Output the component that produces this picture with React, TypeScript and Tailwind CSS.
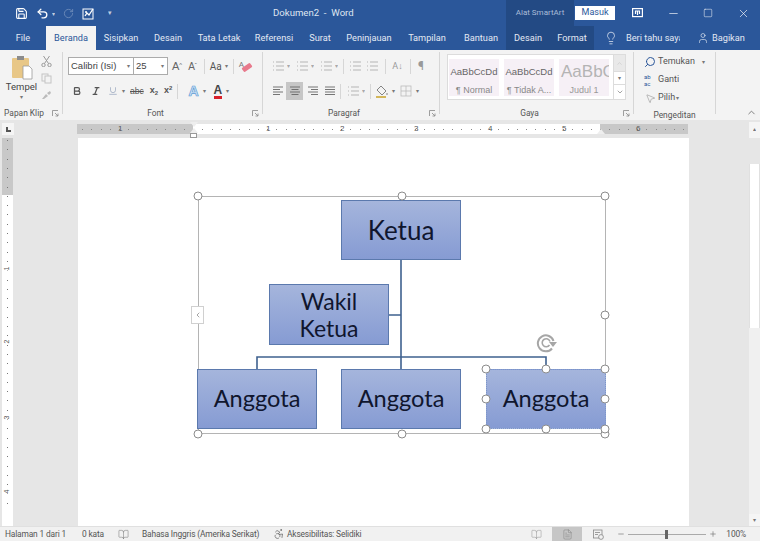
import { Search, Lightbulb, User, MousePointer2, Minus, Square, X, ChevronUp, ChevronDown, Save, Undo2, Bold, Italic, Underline, RotateCcw, ChevronLeft, Accessibility, BookOpen, FileText, Plus } from 'lucide-react';

const hRulerTicks = Array.from({ length: 66 }, (_, i) => i);

export default function App() {
  return (
    <div className="w-[760px] h-[541px] flex flex-col overflow-hidden bg-[#e6e6e6] text-[#444] font-['Roboto','Liberation_Sans',sans-serif]">
      <TitleBar />
      <Tabs />
      <Ribbon />
      <RulerRow />
      <Workspace />
      <StatusBar />
    </div>
  );
}

function TitleBar() {
  return (
    <div className="h-[26px] shrink-0 bg-[#2b579a] flex items-center text-white relative">
      <div className="w-[273px] flex items-center pl-[15px] shrink-0">
        <Save size={13} strokeWidth={2} />
        <Undo2 size={13} strokeWidth={2.4} className="ml-[8px]" />
        <span className="text-[6px] opacity-70 ml-[3px]">▾</span>
        <RotateCcw size={11} strokeWidth={2} className="opacity-30 -scale-x-100 ml-[8px]" />
        <svg className="ml-[8px]" width="13" height="13" viewBox="0 0 13 13" fill="none" stroke="white" strokeWidth="1">
          <rect x="1" y="2" width="10" height="10" />
          <path d="M3 9l2-3 2 2 4-6M3 5h2" strokeWidth="1.3" />
        </svg>
        <span className="text-[7px] opacity-70 ml-[13px]">▾</span>
      </div>
      <div className="text-[9.6px] text-[#dfe6f1] whitespace-pre">Dokumen2  -  Word</div>
      <div className="ml-auto flex items-center h-full">
        <div className="w-[68px] h-full bg-[#234a84] flex items-center justify-center text-[8px] text-[#a9bcd8]">Alat SmartArt</div>
        <div className="w-[40px] h-[14px] ml-[1px] bg-white text-[#2b579a] text-[9px] flex items-center justify-center">Masuk</div>
        <svg className="ml-[17px]" width="11" height="10" viewBox="0 0 11 10" fill="none" stroke="white" strokeWidth="1.2">
          <rect x="0.6" y="0.6" width="9.8" height="8" />
          <path d="M3.5 6V3h4v3M5.5 3v4" />
        </svg>
        <Minus size={13} className="ml-[24px]" strokeWidth={1.2} />
        <Square size={10} className="ml-[23px]" strokeWidth={1.2} />
        <X size={13} className="ml-[24px] mr-[10px]" strokeWidth={1.2} />
      </div>
    </div>
  );
}

function Tabs() {
  const left = [
    ['Sisipkan', 'w-[50px]'],
    ['Desain', 'w-[44px]'],
    ['Tata Letak', 'w-[58px]'],
    ['Referensi', 'w-[52px]'],
    ['Surat', 'w-[40px]'],
    ['Peninjauan', 'w-[58px]'],
    ['Tampilan', 'w-[58px]'],
    ['Bantuan', 'w-[50px]'],
  ];
  return (
    <div className="h-[24px] shrink-0 bg-[#2b579a] flex items-stretch text-[9.2px] text-[#e3e9f3]">
      <div className="w-[46px] flex items-center justify-center">File</div>
      <div className="w-[50px] bg-[#f3f3f3] text-[#2b579a] flex items-center justify-center">Beranda</div>
      {left.map(([t, w]) => (
        <div key={t} className={`${w} flex items-center justify-center`}>{t}</div>
      ))}
      <div className="w-[88px] bg-[#234a84] flex items-center">
        <span className="w-[44px] text-center">Desain</span>
        <span className="w-[44px] text-center">Format</span>
      </div>
      <div className="flex-1 flex items-center whitespace-nowrap">
        <Lightbulb size={14} strokeWidth={1.3} className="ml-[10px] shrink-0" />
        <span className="ml-[8px] w-[54px] overflow-hidden">Beri tahu saya</span>
        <User size={12} strokeWidth={1.3} className="ml-[17px] shrink-0" />
        <span className="ml-[3px]">Bagikan</span>
      </div>
    </div>
  );
}

function GroupLabel({ label, launcher = true }: { label: string; launcher?: boolean }) {
  return (
    <div className={`h-[15px] pt-[2px] relative flex items-center justify-center text-[8.4px] text-[#555] whitespace-nowrap ${launcher ? 'pr-[14px]' : ''}`}>
      {label}
      {launcher && (
        <svg className="absolute right-[3px] top-[5px]" width="7" height="7" viewBox="0 0 7 7" fill="none" stroke="#888" strokeWidth="0.8">
          <path d="M0.5 6V0.5H6M3 3l3 3M6 3.5V6H3.5" />
        </svg>
      )}
    </div>
  );
}

function Sep() {
  return <div className="w-px h-[62px] self-start mt-[2px] bg-[#d6d6d6] shrink-0" />;
}

function Caret({ className = '' }: { className?: string }) {
  return <span className={`text-[6px] text-[#777] leading-none ${className}`}>▾</span>;
}

function ListIcon({ faded = true }: { faded?: boolean }) {
  return (
    <svg width="13" height="12" viewBox="0 0 13 12" fill="none" stroke={faded ? '#b5b5b5' : '#666'} strokeWidth="1">
      <path d="M1 2h1M1 6h1M1 10h1M4 2h8M4 6h8M4 10h8" />
    </svg>
  );
}

function AlignIcon({ kind }: { kind: 'l' | 'c' | 'r' | 'j' }) {
  const rows = {
    l: 'M1 2h10M1 4.5h7M1 7h10M1 9.5h7',
    c: 'M1 2h10M2.5 4.5h7M1 7h10M2.5 9.5h7',
    r: 'M1 2h10M4 4.5h7M1 7h10M4 9.5h7',
    j: 'M1 2h10M1 4.5h10M1 7h10M1 9.5h10',
  };
  return (
    <svg width="12" height="12" viewBox="0 0 12 12" fill="none" stroke="#666" strokeWidth="0.9">
      <path d={rows[kind]} />
    </svg>
  );
}

function StyleCard({ sample, name, big = false }: { sample: string; name: string; big?: boolean }) {
  return (
    <div className="w-[50px] h-[37px] bg-[#f6f0f6] flex flex-col items-center overflow-hidden whitespace-nowrap text-[#666] font-['Liberation_Sans',sans-serif]">
      <span className={big ? 'text-[17px] leading-[21px] mt-[2px] ml-[2px] self-start text-[#b4b4b4]' : 'text-[9.5px] leading-[14px] mt-[6px]'}>{sample}</span>
      <span className={big ? 'text-[9px] leading-[12px] mt-[2px] text-[#999]' : 'text-[9px] leading-[12px] mt-[5px] text-[#888]'}>{name}</span>
    </div>
  );
}

function Ribbon() {
  return (
    <div className="h-[70px] shrink-0 bg-[#f3f3f3] flex items-stretch">
      {/* Papan Klip */}
      <div className="w-[62px] flex flex-col shrink-0">
        <div className="flex-1 flex">
          <div className="w-[41px] flex flex-col items-center pt-[5px] pl-[2px]">
            <svg width="24" height="25" viewBox="0 0 24 25">
              <rect x="2" y="3" width="17" height="20" rx="1" fill="#e8c787" />
              <rect x="7" y="1" width="7" height="4" fill="#8c8c8c" />
              <path d="M13 11h6l3 3v10h-9z" fill="#fff" stroke="#999" strokeWidth="0.8" />
            </svg>
            <span className="text-[9.5px] leading-[12px] mt-[1px]">Tempel</span>
            <Caret className="mt-[1px]" />
          </div>
          <div className="flex flex-col items-center gap-[6px] pt-[5px]">
            <svg width="11" height="12" viewBox="0 0 11 12" fill="none" stroke="#999" strokeWidth="1">
              <circle cx="2.5" cy="10" r="1.7" />
              <circle cx="8.5" cy="10" r="1.7" />
              <path d="M3.5 8.5L8.5 1M7.5 8.5L2.5 1" />
            </svg>
            <svg width="11" height="11" viewBox="0 0 11 11" fill="none" stroke="#c4c4c4" strokeWidth="1">
              <rect x="1" y="1" width="6" height="7" />
              <rect x="4" y="3" width="6" height="7" fill="#f3f3f3" />
            </svg>
            <svg width="11" height="10" viewBox="0 0 11 10" fill="none">
              <path d="M1 9l4-5 2 2-4 3zM6 3l3-2 1 2-2 2z" fill="#bbb" />
            </svg>
          </div>
        </div>
        <GroupLabel label="Papan Klip" />
      </div>
      <Sep />
      {/* Font */}
      <div className="w-[199px] flex flex-col shrink-0">
        <div className="flex-1 pl-[5px] pt-[7px]">
          <div className="flex items-center h-[18px]">
            <div className="w-[66px] h-[18px] bg-white border border-[#ababab] flex items-center justify-between px-[2px] text-[9.5px] font-['Liberation_Sans',sans-serif]">
              Calibri (Isi)<Caret className="mr-[1px]" />
            </div>
            <div className="w-[35px] h-[18px] -ml-px bg-white border border-[#ababab] flex items-center justify-between px-[2px] text-[9.5px] font-['Liberation_Sans',sans-serif]">
              25<Caret className="mr-[1px]" />
            </div>
            <span className="ml-[4px] text-[11px] text-[#666] font-['Liberation_Sans',sans-serif]">A<sup className="text-[6px]">^</sup></span>
            <span className="ml-[6px] text-[10px] text-[#666] font-['Liberation_Sans',sans-serif]">A<sup className="text-[6px]">ˇ</sup></span>
            <div className="w-px h-[15px] bg-[#d6d6d6] ml-[7px]" />
            <span className="ml-[5px] text-[10px] text-[#555]">Aa</span>
            <Caret className="ml-[3px]" />
            <div className="w-px h-[15px] bg-[#d6d6d6] ml-[5px]" />
            <span className="relative ml-[5px] w-[13px] h-[13px] text-[8px] leading-[9px] text-[#777]">
              A
              <span className="absolute left-[3px] top-[5px] w-[10px] h-[5px] -rotate-[35deg] rounded-[1px] bg-[#e8798c]" />
            </span>
          </div>
          <div className="flex items-center h-[18px] mt-[7px] pl-[4px] text-[#555] font-['Liberation_Sans',sans-serif]">
            <Bold size={10} strokeWidth={3} />
            <Italic size={10} strokeWidth={3} className="ml-[9px]" />
            <Underline size={10} strokeWidth={1.5} className="ml-[7px] text-[#8a9ab5]" />
            <Caret className="ml-[4px]" />
            <span className="ml-[5px] text-[8.5px] line-through">abc</span>
            <span className="ml-[6px] text-[9px] font-bold">x<sub className="text-[6px]">2</sub></span>
            <span className="ml-[6px] text-[9px] font-bold">x<sup className="text-[6px]">2</sup></span>
            <div className="w-px h-[15px] bg-[#d6d6d6] ml-[5px]" />
            <span className="ml-[10px] text-[14px] leading-none font-bold text-[#cfe2f5] [-webkit-text-stroke:0.7px_#5b9bd5]">A</span>
            <Caret className="ml-[4px]" />
            <span className="ml-[8px] text-[12px] leading-[12px] font-bold text-[#444] border-b-[3px] border-[#d9202a]">A</span>
            <Caret className="ml-[4px]" />
          </div>
        </div>
        <GroupLabel label="Font" />
      </div>
      <Sep />
      {/* Paragraf */}
      <div className="w-[176px] flex flex-col shrink-0">
        <div className="flex-1 pl-[9px] pt-[8px]">
          <div className="flex items-center h-[16px]">
            <ListIcon />
            <Caret className="ml-[2px] mr-[6px] opacity-60" />
            <ListIcon />
            <Caret className="ml-[2px] mr-[6px] opacity-60" />
            <ListIcon />
            <Caret className="ml-[2px] opacity-60" />
            <div className="w-px h-[15px] bg-[#d6d6d6] mx-[5px]" />
            <ListIcon />
            <span className="w-[4px]" />
            <ListIcon />
            <div className="w-px h-[15px] bg-[#d6d6d6] ml-[6px] mr-[5px]" />
            <span className="text-[9px] leading-[9px] text-[#999] w-[13px] text-center">A↓</span>
            <div className="w-px h-[15px] bg-[#d6d6d6] ml-[6px] mr-[7px]" />
            <span className="text-[12px] text-[#999] leading-none">¶</span>
          </div>
          <div className="flex items-center h-[18px] mt-[8px]">
            <AlignIcon kind="l" />
            <div className="w-[17px] h-[18px] bg-[#c6c6c6] flex items-center justify-center ml-[2px]"><AlignIcon kind="c" /></div>
            <span className="ml-[4px]"><AlignIcon kind="r" /></span>
            <span className="ml-[5px]"><AlignIcon kind="j" /></span>
            <div className="w-px h-[15px] bg-[#d6d6d6] ml-[4px] mr-[6px]" />
            <ListIcon />
            <Caret className="ml-[2px] opacity-60" />
            <div className="w-px h-[15px] bg-[#d6d6d6] ml-[5px] mr-[4px]" />
            <svg width="14" height="13" viewBox="0 0 14 13" fill="none" stroke="#777" strokeWidth="0.9">
              <path d="M6 1l5 5-4 4-5-5zM12 8v2" />
              <path d="M1 12h10" stroke="#c9a227" strokeWidth="1.5" />
            </svg>
            <Caret className="ml-[3px]" />
            <svg className="ml-[5px]" width="12" height="12" viewBox="0 0 12 12" fill="none" stroke="#bbb" strokeWidth="0.8">
              <rect x="1" y="1" width="10" height="10" />
              <path d="M6 1v10M1 6h10" />
            </svg>
            <Caret className="ml-[4px]" />
          </div>
        </div>
        <GroupLabel label="Paragraf" />
      </div>
      <Sep />
      {/* Gaya */}
      <div className="w-[193px] flex flex-col shrink-0">
        <div className="flex-1 pl-[7px] pt-[4px]">
          <div className="w-[179px] h-[46px] bg-white border border-[#dcdcdc] flex items-center">
            <div className="flex gap-[5px] ml-[1px]">
              <StyleCard sample="AaBbCcDd" name="¶ Normal" />
              <StyleCard sample="AaBbCcDd" name="¶ Tidak A..." />
              <StyleCard sample="AaBbCc" name="Judul 1" big />
            </div>
            <div className="ml-auto w-[12px] h-full flex flex-col border-l border-[#dcdcdc] text-[#777]">
              <div className="h-[16px] bg-[#e9e9e9] flex items-center justify-center"><ChevronUp size={7} className="opacity-30" /></div>
              <div className="h-[14px] flex items-center justify-center border-y border-[#dcdcdc]"><Caret /></div>
              <div className="flex-1 flex items-center justify-center"><ChevronDown size={8} /></div>
            </div>
          </div>
        </div>
        <GroupLabel label="Gaya" />
      </div>
      <Sep />
      {/* Pengeditan */}
      <div className="w-[81px] flex flex-col shrink-0">
        <div className="flex-1 pl-[10px] pt-[3px] text-[9px] text-[#555]">
          <div className="h-[18px] flex items-center">
            <Search size={12} className="text-[#2b579a] -scale-x-100" />
            <span className="ml-[2px]">Temukan</span>
            <Caret className="ml-[7px]" />
          </div>
          <div className="h-[18px] flex items-center">
            <span className="w-[12px] text-[6px] leading-[7px] text-[#2b579a]">ab<br />ac</span>
            <span className="ml-[2px]">Ganti</span>
          </div>
          <div className="h-[18px] flex items-center">
            <MousePointer2 size={11} strokeWidth={1} className="text-[#777] ml-[1px]" />
            <span className="ml-[2px]">Pilih</span>
            <Caret className="ml-[1px]" />
          </div>
        </div>
        <GroupLabel label="Pengeditan" launcher={false} />
      </div>
      <Sep />
      <div className="flex-1 flex items-end justify-end pr-[3px] pb-[2px]">
        <ChevronUp size={11} className="text-[#777]" />
      </div>
    </div>
  );
}

function RulerRow() {
  return (
    <div className="h-[18px] shrink-0 bg-[#e6e6e6] flex items-center relative">
      <div className="ml-[2px] w-[12px] h-[12px] bg-[#f5f5f5] flex items-center justify-center">
        <div className="w-[5px] h-[5px] border-l-[2px] border-b-[2px] border-[#555]" />
      </div>
      <div className="ml-[63px] w-[611px] h-[10px] flex">
        <div className="w-[116px] bg-[#c8c8c8]" />
        <div className="w-[407px] bg-white" />
        <div className="w-[88px] bg-[#c8c8c8]" />
      </div>
      {/* ticks and numbers sit over the ruler strip */}
      <div className="absolute left-[77px] top-[4px] w-[611px] h-[10px] text-[8px] leading-[10px] text-[#555] font-['Liberation_Sans',sans-serif]">
        {hRulerTicks.map((i) => (
          <span key={i} className="absolute top-[5px] w-px h-px bg-[#888]" style={{ left: 5 + i * 9.25 }} />
        ))}
        {[
          ['1', 41],
          ['1', 189],
          ['2', 263],
          ['3', 337],
          ['4', 411],
          ['5', 485],
          ['6', 559],
        ].map(([n, x], i) => (
          <span key={i} className="absolute top-0" style={{ left: Number(x) }}>{n}</span>
        ))}
      </div>
      {/* indent markers */}
      <div className="absolute left-[190px] top-[2px] w-0 h-0 border-l-[4px] border-r-[4px] border-t-[5px] border-l-transparent border-r-transparent border-t-[#eee]" />
      <div className="absolute left-[190px] top-[8px] w-0 h-0 border-l-[4px] border-r-[4px] border-b-[5px] border-l-transparent border-r-transparent border-b-[#eee]" />
      <div className="absolute left-[190px] top-[13px] w-[7px] h-[5px] bg-white border border-[#999]" />
      <div className="absolute left-[597px] top-[9px] w-0 h-0 border-l-[4px] border-r-[4px] border-b-[5px] border-l-transparent border-r-transparent border-b-[#eee]" />
      <div className="absolute right-[0px] top-[2px] w-[11px] h-[16px] bg-[#f5f5f5] flex items-center justify-center">
        <Caret className="rotate-180" />
      </div>
    </div>
  );
}

function VerticalRuler() {
  const labels = [
    ['1', 127],
    ['2', 200],
    ['3', 276],
    ['4', 350],
  ];
  return (
    <div className="w-[11px] ml-[2px] shrink-0 relative flex flex-col self-stretch text-[7px] text-[#555] font-['Liberation_Sans',sans-serif]">
      <div className="h-[57px] bg-[#c8c8c8]" />
      <div className="flex-1 bg-white" />
      {Array.from({ length: 40 }, (_, i) => (
        <span key={i} className="absolute left-[5px] w-px h-px bg-[#777]" style={{ top: 2 + i * 9.3 }} />
      ))}
      {labels.map(([n, y]) => (
        <span key={n} className="absolute left-[3px] -rotate-90 bg-white leading-none" style={{ top: Number(y) }}>{n}</span>
      ))}
    </div>
  );
}

function Workspace() {
  return (
    <div className="flex-1 min-h-0 flex bg-[#e6e6e6]">
      <VerticalRuler />
      <div className="ml-[65px] w-[611px] bg-white shrink-0 relative">
        <SmartArt />
      </div>
      <div className="ml-[60px] w-[11px] bg-[#f0f0f0] shrink-0 flex flex-col items-center relative">
        <div className="h-[26px] w-full bg-[#e6e6e6]" />
        <div className="h-[164px] w-full bg-white border-x border-[#e0e0e0]" />
        <div className="flex-1" />
        <div className="h-[12px] w-full flex items-center justify-center bg-[#f5f5f5]"><Caret /></div>
      </div>
    </div>
  );
}

const nodeClass =
  "absolute flex items-center justify-center text-center bg-gradient-to-b from-[#a5b5dc] to-[#869bd3] border border-[#5b79ad] text-[#10162e] font-['Lato','Liberation_Sans',sans-serif]";

function Handle({ x, y }: { x: number; y: number }) {
  return (
    <span
      className="absolute w-[9px] h-[9px] rounded-full bg-white border-[1.5px] border-[#8c8c8c] -translate-x-1/2 -translate-y-1/2"
      style={{ left: x, top: y }}
    />
  );
}

function SmartArt() {
  // workspace origin: x 78, y 138. Everything here is a node on the diagram canvas.
  const ox = 78;
  const oy = 138;
  const frameHandles = [
    [198, 196], [402, 196], [605, 196],
    [605, 315],
    [198, 434], [402, 434], [605, 434],
  ];
  const nodeHandles = [
    [486, 369], [546, 369], [605, 369],
    [486, 399], [605, 399],
    [486, 429], [546, 429], [605, 429],
  ];
  return (
    <>
      <div className="absolute border border-[#b4b4b4]" style={{ left: 198 - ox, top: 196 - oy, width: 408, height: 238 }} />
      {/* connectors */}
      <svg className="absolute overflow-visible" style={{ left: 0, top: 0 }} width="1" height="1" fill="none" stroke="#3f618f" strokeWidth="1.6">
        <path d={`M${401 - ox} ${259 - oy}V${369 - oy}M${389 - ox} ${315 - oy}H${401 - ox}M${257 - ox} ${369 - oy}V${357 - oy}H${546 - ox}V${369 - oy}`} />
      </svg>
      <div className={`${nodeClass} text-[26px] leading-[30px]`} style={{ left: 341 - ox, top: 200 - oy, width: 120, height: 60 }}>Ketua</div>
      <div className={`${nodeClass} text-[23px] leading-[27px]`} style={{ left: 269 - ox, top: 284 - oy, width: 120, height: 61 }}>Wakil<br />Ketua</div>
      <div className={`${nodeClass} text-[23.6px]`} style={{ left: 197 - ox, top: 369 - oy, width: 120, height: 60 }}>Anggota</div>
      <div className={`${nodeClass} text-[23.6px]`} style={{ left: 341 - ox, top: 369 - oy, width: 120, height: 60 }}>Anggota</div>
      <div className={`${nodeClass} text-[23.6px] border-dotted border-[#7d96c8]`} style={{ left: 486 - ox, top: 369 - oy, width: 120, height: 60 }}>Anggota</div>
      {frameHandles.map(([x, y]) => <Handle key={`f${x}-${y}`} x={x - ox} y={y - oy} />)}
      {nodeHandles.map(([x, y]) => <Handle key={`n${x}-${y}`} x={x - ox} y={y - oy} />)}
      <div className="absolute w-[13px] h-[18px] bg-white border border-[#d0d0d0] flex items-center justify-center" style={{ left: 191 - ox, top: 306 - oy }}>
        <ChevronLeft size={8} className="text-[#777]" />
      </div>
      <svg className="absolute" style={{ left: 536 - ox, top: 334 - oy }} width="22" height="20" viewBox="0 0 22 20" fill="none" stroke="#a6a6a6">
        <path d="M16 14.5A8 8 0 1 1 17.5 7" strokeWidth="2" />
        <path d="M13.5 11A4 4 0 1 1 14 7.5" strokeWidth="1.6" />
        <path d="M13 8h8l-4 5z" fill="#a6a6a6" stroke="none" />
      </svg>
    </>
  );
}

function StatusBar() {
  return (
    <div className="h-[15px] shrink-0 bg-[#f1f1f1] border-t border-[#e0e0e0] flex items-center text-[8.4px] tracking-[-0.15px] text-[#555] whitespace-nowrap">
      <span className="ml-[5px] w-[62px]">Halaman 1 dari 1</span>
      <span className="ml-[15px] w-[26px]">0 kata</span>
      <BookOpen size={11} strokeWidth={1} className="ml-[10px] text-[#666]" />
      <span className="ml-[13px] w-[118px]">Bahasa Inggris (Amerika Serikat)</span>
      <Accessibility size={12} strokeWidth={1.3} className="ml-[13px] text-[#555]" />
      <span className="ml-[2px]">Aksesibilitas: Selidiki</span>
      <div className="ml-auto flex items-center h-full">
        <BookOpen size={11} strokeWidth={1} className="text-[#888]" />
        <div className="ml-[10px] w-[30px] h-full bg-[#c6c6c6] flex items-center justify-center">
          <FileText size={11} strokeWidth={1} className="text-[#777]" />
        </div>
        <svg className="ml-[11px]" width="11" height="11" viewBox="0 0 11 11" fill="none" stroke="#888" strokeWidth="0.8">
          <rect x="0.5" y="1" width="8.5" height="8" />
          <path d="M2 3.5h5M2 5.5h3" />
          <circle cx="8" cy="8" r="2.4" fill="#f1f1f1" />
        </svg>
        <Minus size={8} className="ml-[13px] text-[#777]" />
        <div className="w-[78px] mx-[3px] h-px bg-[#aaa] relative">
          <span className="absolute left-[37px] -top-[4px] w-[3px] h-[9px] bg-[#666]" />
        </div>
        <Plus size={8} className="text-[#777]" />
        <span className="ml-[9px] mr-[14px]">100%</span>
      </div>
    </div>
  );
}
